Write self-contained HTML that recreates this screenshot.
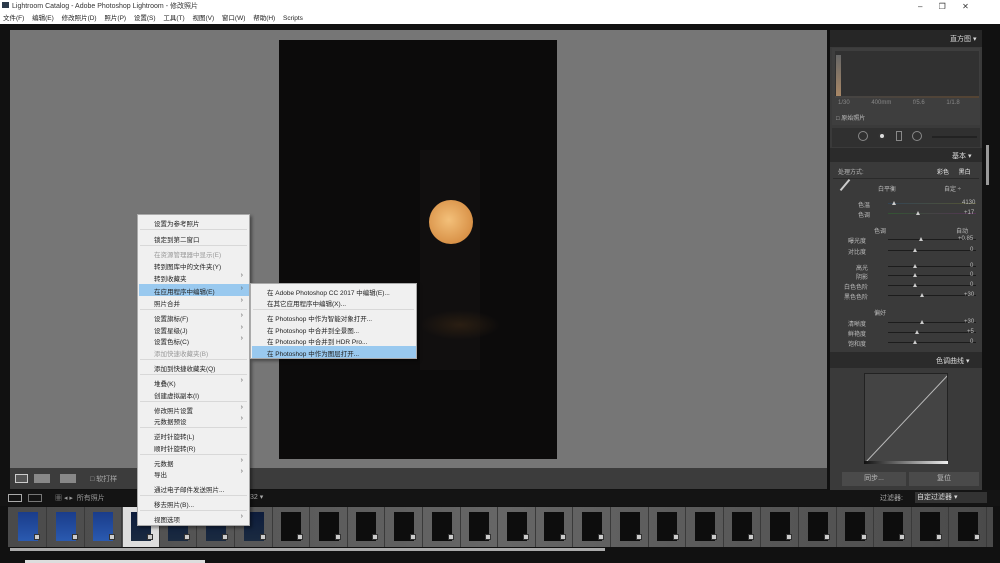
<!DOCTYPE html>
<html><head><meta charset="utf-8"><style>
*{margin:0;padding:0;box-sizing:border-box}
body{width:1000px;height:563px;overflow:hidden;background:#111;font-family:"Liberation Sans","Noto Sans CJK SC",sans-serif;position:relative;font-size:7px}
.a{position:absolute}
.mi{position:absolute;left:16px;color:#222;font-size:6.5px;white-space:nowrap}
.ar{position:absolute;right:6px;color:#555;font-size:7px}
.sep{position:absolute;left:2px;right:2px;height:1px;background:#d8d8d8}
.lbl{position:absolute;color:#bbb;font-size:6px;white-space:nowrap}
.sl{position:absolute;height:1px;background:#1c1c1c;left:58px;width:88px}
.kn{position:absolute;width:0;height:0;border-left:2px solid transparent;border-right:2px solid transparent;border-bottom:4px solid #ccc}
</style></head><body>
<!-- title -->
<div class="a" style="left:0;top:0;width:1000px;height:24px;background:#fff"></div>
<div class="a" style="left:2px;top:2px;width:7px;height:6px;background:#2b3a4a"></div>
<div class="a" style="left:12px;top:1px;color:#333;font-size:7px">Lightroom Catalog - Adobe Photoshop Lightroom - 修改照片</div>
<div class="a" style="left:3px;top:12px;color:#222;font-size:6.5px;word-spacing:6px;white-space:nowrap">文件(F) 编辑(E) 修改照片(D) 照片(P) 设置(S) 工具(T) 视图(V) 窗口(W) 帮助(H) Scripts</div>
<div class="a" style="left:918px;top:2px;color:#333;font-size:8px;word-spacing:14px">– ❐ ✕</div>
<!-- main gray -->
<div class="a" style="left:10px;top:30px;width:817px;height:438px;background:#767676"></div>
<div class="a" style="left:279px;top:40px;width:278px;height:419px;background:#0c0b0b"></div>
<div class="a" style="left:420px;top:150px;width:60px;height:220px;background:#110f0f"></div>
<div class="a" style="left:429px;top:200px;width:44px;height:44px;border-radius:50%;background:radial-gradient(circle at 45% 45%,#f3c07a,#d99248 70%,#b86e30)"></div>
<div class="a" style="left:420px;top:310px;width:80px;height:30px;background:radial-gradient(ellipse,#2a1e12,transparent 70%)"></div>
<!-- toolbar -->
<div class="a" style="left:10px;top:468px;width:817px;height:21px;background:#3c3c3c"></div>
<div class="a" style="left:15px;top:474px;width:13px;height:9px;border:1px solid #ccc;background:#555"></div>
<div class="a" style="left:34px;top:474px;width:16px;height:9px;background:#888"></div>
<div class="a" style="left:60px;top:474px;width:16px;height:9px;background:#888"></div>
<div class="a" style="left:90px;top:474px;color:#aaa;font-size:7px">□ 软打样</div>
<!-- right panel -->
<div class="a" style="left:830px;top:30px;width:152px;height:460px;background:#3a3a3a"></div>
<div class="a" style="left:830px;top:30px;width:152px;height:17px;background:#262626"></div>
<div class="a" style="left:950px;top:34px;color:#ddd;font-size:7px">直方图 ▾</div>
<div class="a" style="left:832px;top:48px;width:148px;height:77px;background:#3e3e3e"></div>
<div class="a" style="left:835px;top:51px;width:144px;height:47px;background:#313131"></div>
<div class="a" style="left:836px;top:55px;width:5px;height:42px;background:linear-gradient(#666,#a86)"></div>
<div class="a" style="left:835px;top:96px;width:144px;height:2px;background:linear-gradient(90deg,#444,#543)"></div>
<div class="lbl" style="left:838px;top:100px;color:#888;word-spacing:20px">1/30 400mm f/5.6 1/1.8</div>
<div class="lbl" style="left:836px;top:113px">□ 原始照片</div>
<div class="a" style="left:832px;top:128px;width:148px;height:19px;background:#303030"></div>
<div class="a" style="left:858px;top:131px;width:10px;height:10px;border-radius:50%;border:1px solid #888"></div>
<div class="a" style="left:878px;top:132px;width:8px;height:8px;border-radius:50%;background:#ddd;border:2px solid #333"></div>
<div class="a" style="left:896px;top:131px;width:6px;height:10px;border:1px solid #888"></div>
<div class="a" style="left:912px;top:131px;width:10px;height:10px;border-radius:50%;border:1px solid #888"></div>
<div class="a" style="left:932px;top:136px;width:45px;height:2px;background:#222"></div>
<div class="a" style="left:830px;top:148px;width:152px;height:14px;background:#2b2b2b"></div>
<div class="a" style="left:952px;top:151px;color:#ddd;font-size:7px">基本 ▾</div>
<div class="lbl" style="left:838px;top:167px">处理方式:</div>
<div class="lbl" style="left:937px;top:167px;color:#eee;word-spacing:8px">彩色 黑白</div>
<div class="a" style="left:833px;top:178px;width:146px;height:1px;background:#2a2a2a"></div>
<div class="a" style="left:838px;top:184px;width:14px;height:2px;background:#ccc;transform:rotate(-50deg)"></div>
<div class="lbl" style="left:878px;top:184px">白平衡</div>
<div class="lbl" style="left:944px;top:184px">自定 ÷</div>
<div class="a" style="left:830px;top:198px;width:152px;height:150px">
<div class="lbl" style="left:28px;top:2px">色温</div><div class="sl" style="top:5px;background:linear-gradient(90deg,#345,#553)"></div><div class="kn" style="left:62px;top:3px"></div><div class="lbl" style="left:132px;top:2px">4130</div>
<div class="lbl" style="left:28px;top:12px">色调</div><div class="sl" style="top:15px;background:linear-gradient(90deg,#353,#535)"></div><div class="kn" style="left:86px;top:13px"></div><div class="lbl" style="left:134px;top:12px">+17</div>
<div class="lbl" style="left:44px;top:28px">色调</div><div class="lbl" style="left:126px;top:28px">自动</div>
<div class="lbl" style="left:18px;top:38px">曝光度</div><div class="sl" style="top:41px"></div><div class="kn" style="left:89px;top:39px"></div><div class="lbl" style="left:128px;top:38px">+0.85</div>
<div class="lbl" style="left:18px;top:49px">对比度</div><div class="sl" style="top:52px"></div><div class="kn" style="left:83px;top:50px"></div><div class="lbl" style="left:140px;top:49px">0</div>
<div class="lbl" style="left:26px;top:65px">高光</div><div class="sl" style="top:68px"></div><div class="kn" style="left:83px;top:66px"></div><div class="lbl" style="left:140px;top:65px">0</div>
<div class="lbl" style="left:26px;top:74px">阴影</div><div class="sl" style="top:77px"></div><div class="kn" style="left:83px;top:75px"></div><div class="lbl" style="left:140px;top:74px">0</div>
<div class="lbl" style="left:14px;top:84px">白色色阶</div><div class="sl" style="top:87px"></div><div class="kn" style="left:83px;top:85px"></div><div class="lbl" style="left:140px;top:84px">0</div>
<div class="lbl" style="left:14px;top:94px">黑色色阶</div><div class="sl" style="top:97px"></div><div class="kn" style="left:90px;top:95px"></div><div class="lbl" style="left:134px;top:94px">+30</div>
<div class="lbl" style="left:44px;top:110px">偏好</div>
<div class="lbl" style="left:18px;top:121px">清晰度</div><div class="sl" style="top:124px"></div><div class="kn" style="left:90px;top:122px"></div><div class="lbl" style="left:134px;top:121px">+30</div>
<div class="lbl" style="left:18px;top:131px">鲜艳度</div><div class="sl" style="top:134px"></div><div class="kn" style="left:85px;top:132px"></div><div class="lbl" style="left:137px;top:131px">+5</div>
<div class="lbl" style="left:18px;top:141px">饱和度</div><div class="sl" style="top:144px"></div><div class="kn" style="left:83px;top:142px"></div><div class="lbl" style="left:140px;top:141px">0</div>
</div>
<div class="a" style="left:830px;top:352px;width:152px;height:16px;background:#2b2b2b"></div>
<div class="a" style="left:936px;top:356px;color:#ddd;font-size:7px">色调曲线 ▾</div>
<div class="a" style="left:864px;top:373px;width:84px;height:89px;background:#444;border:1px solid #222;overflow:hidden">
<svg width="84" height="89"><line x1="0" y1="89" x2="84" y2="0" stroke="#bbb" stroke-width="1"/></svg></div>
<div class="a" style="left:864px;top:461px;width:84px;height:3px;background:linear-gradient(90deg,#111,#eee)"></div>
<div class="a" style="left:842px;top:472px;width:64px;height:14px;background:#4a4a4a;color:#bbb;font-size:7px;text-align:center;line-height:14px">同步...</div>
<div class="a" style="left:909px;top:472px;width:70px;height:14px;background:#4a4a4a;color:#bbb;font-size:7px;text-align:center;line-height:14px">复位</div>
<div class="a" style="left:986px;top:145px;width:3px;height:40px;background:#999"></div>
<!-- filmstrip -->
<div class="a" style="left:0;top:490px;width:1000px;height:16px;background:#141414"></div>
<div class="a" style="left:8px;top:494px;width:14px;height:8px;border:1px solid #aaa"></div>
<div class="a" style="left:28px;top:494px;width:14px;height:8px;border:1px solid #777"></div>
<div class="a" style="left:55px;top:493px;color:#999;font-size:7px">▦ ◂ ▸ &nbsp;所有照片</div>
<div class="a" style="left:250px;top:493px;color:#aaa;font-size:7px">32 ▾</div>
<div class="a" style="left:880px;top:493px;color:#aaa;font-size:7px">过滤器:</div>
<div class="a" style="left:915px;top:492px;width:72px;height:11px;background:#333;color:#ddd;font-size:7px;padding-left:2px">自定过滤器 ▾</div>
<div class="a" style="left:8px;top:507px;width:985px;height:40px;background:linear-gradient(90deg,#4a4a4a,#666 50%,#4a4a4a)"></div>
<div id="fs"></div>
<div class="a" style="left:10px;top:548px;width:595px;height:3px;background:#aaa"></div>
<div class="a" style="left:25px;top:560px;width:180px;height:3px;background:#ddd"></div>
<script>
var h='';for(var i=0;i<26;i++){var x=10+i*37.6;var sel=i==3;
h+='<div class="a" style="left:'+x+'px;top:507px;width:37px;height:40px;border-right:1px solid #3a3a3a;'+(sel?'background:#ddd;':'')+'"></div>';
var c=i<3?'linear-gradient(#1a3c8a,#2a5ab0)':(i<7?'linear-gradient(#0d1c3c,#1a2a40)':'#0d0d0d');
h+='<div class="a" style="left:'+(x+8)+'px;top:512px;width:20px;height:29px;background:'+c+'"></div>';
h+='<div class="a" style="left:'+(x+24)+'px;top:534px;width:6px;height:6px;background:#ccc;border:1px solid #333"></div>';}
document.getElementById('fs').outerHTML=h;
</script>
<!-- context menu -->
<div class="a" style="left:137px;top:214px;width:113px;height:312px;background:#f0f0f0;border:1px solid #aaa;box-shadow:2px 2px 3px rgba(0,0,0,.4)">
<div class="mi" style="top:3px">设置为参考照片</div><div class="sep" style="top:14px"></div>
<div class="mi" style="top:19px">锁定到第二窗口</div><div class="sep" style="top:30px"></div>
<div class="mi" style="top:34px;color:#999">在资源管理器中显示(E)</div>
<div class="mi" style="top:46px">转到图库中的文件夹(Y)</div>
<div class="mi" style="top:58px">转到收藏夹</div><div class="ar" style="top:57px">›</div>
<div class="a" style="left:1px;top:69px;width:110px;height:12px;background:#99c9ef"></div>
<div class="mi" style="top:71px">在应用程序中编辑(E)</div><div class="ar" style="top:70px">›</div>
<div class="mi" style="top:83px">照片合并</div><div class="ar" style="top:82px">›</div><div class="sep" style="top:94px"></div>
<div class="mi" style="top:98px">设置旗标(F)</div><div class="ar" style="top:97px">›</div>
<div class="mi" style="top:110px">设置星级(J)</div><div class="ar" style="top:109px">›</div>
<div class="mi" style="top:121px">设置色标(C)</div><div class="ar" style="top:120px">›</div>
<div class="mi" style="top:133px;color:#999">添加快速收藏夹(B)</div><div class="sep" style="top:144px"></div>
<div class="mi" style="top:148px">添加到快捷收藏夹(Q)</div><div class="sep" style="top:159px"></div>
<div class="mi" style="top:163px">堆叠(K)</div><div class="ar" style="top:162px">›</div>
<div class="mi" style="top:175px">创建虚拟副本(I)</div><div class="sep" style="top:186px"></div>
<div class="mi" style="top:190px">修改照片设置</div><div class="ar" style="top:189px">›</div>
<div class="mi" style="top:201px">元数据预设</div><div class="ar" style="top:200px">›</div><div class="sep" style="top:212px"></div>
<div class="mi" style="top:216px">逆时针旋转(L)</div>
<div class="mi" style="top:228px">顺时针旋转(R)</div><div class="sep" style="top:239px"></div>
<div class="mi" style="top:243px">元数据</div><div class="ar" style="top:242px">›</div>
<div class="mi" style="top:254px">导出</div><div class="ar" style="top:253px">›</div>
<div class="mi" style="top:269px">通过电子邮件发送照片...</div><div class="sep" style="top:280px"></div>
<div class="mi" style="top:284px">移去照片(B)...</div><div class="sep" style="top:295px"></div>
<div class="mi" style="top:299px">视图选项</div><div class="ar" style="top:298px">›</div>
</div>
<div class="a" style="left:250px;top:283px;width:167px;height:76px;background:#f0f0f0;border:1px solid #aaa;box-shadow:2px 2px 3px rgba(0,0,0,.4)">
<div class="mi" style="top:3px">在 Adobe Photoshop CC 2017 中编辑(E)...</div>
<div class="mi" style="top:14px">在其它应用程序中编辑(X)...</div><div class="sep" style="top:25px"></div>
<div class="mi" style="top:29px">在 Photoshop 中作为智能对象打开...</div>
<div class="mi" style="top:41px">在 Photoshop 中合并到全景图...</div>
<div class="mi" style="top:52px">在 Photoshop 中合并到 HDR Pro...</div>
<div class="a" style="left:1px;top:62px;width:164px;height:12px;background:#99c9ef"></div>
<div class="mi" style="top:64px">在 Photoshop 中作为图层打开...</div>
</div>
</body></html>
